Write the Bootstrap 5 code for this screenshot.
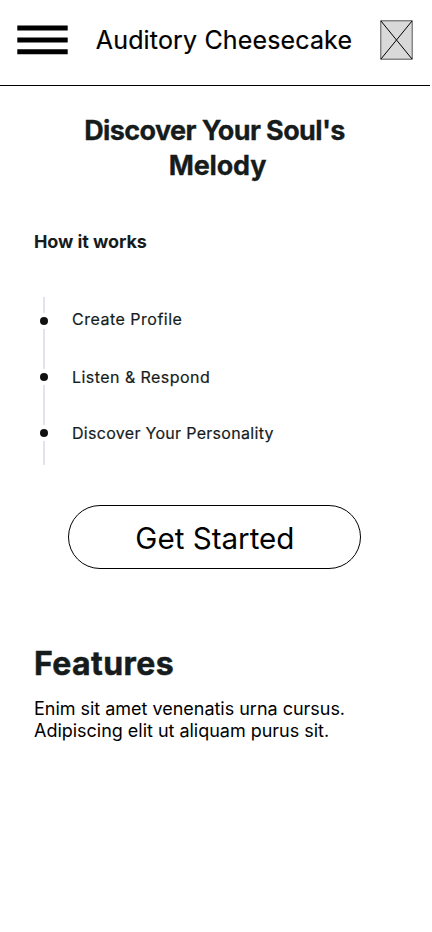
<!DOCTYPE html>
<html lang="en">
<head>
<meta charset="utf-8">
<meta name="viewport" content="width=device-width, initial-scale=1">
<title>Auditory Cheesecake</title>
<link href="https://cdn.jsdelivr.net/npm/bootstrap@5.3.0/dist/css/bootstrap.min.css" rel="stylesheet">
<style>
body{font-family:Inter,sans-serif;color:#000;background:#fff}
.screen{width:430px;height:932px}
.topbar{height:86px;border-bottom:1px solid #000;padding:0 17px 5px}
.app-title{font-size:25px;line-height:30px;letter-spacing:.15px;-webkit-text-stroke:.2px #000}
.content{padding:0 34px}
.ink{color:#161c1c;font-weight:700}
.hero{font-size:27px;line-height:35px;letter-spacing:-.62px;padding-top:27px;padding-right:1px;-webkit-text-stroke:.3px #161c1c}
.h-b{letter-spacing:-.2px;padding-left:6px}
.how{font-size:18px;line-height:24px;letter-spacing:-.08px;margin-top:47px}
.steps{margin-top:43px;height:168px}
.step{height:56px;font-size:16px;line-height:24px;color:#161c1c;-webkit-text-stroke:.2px #161c1c}
.rail{width:20px;margin-right:18px}
.seg{width:2px;background:#e1e5ea}
.seg-top{height:16px}
.dot{width:8px;height:8px;margin:4px 0;background:#111}
.label{padding-top:12px}
.s1{letter-spacing:.5px;padding-top:10px}
.s2{letter-spacing:.45px}
.s3{letter-spacing:.3px}
.start{width:293px;height:64px;margin:40px 0 0 34.4px;border:1px solid #000;font-size:29.6px;line-height:36px;color:#000}
.start-text{padding-top:1px}
.feat{font-size:32px;line-height:40px;letter-spacing:.42px;margin-top:75px;-webkit-text-stroke:.5px #161c1c}
.copy{font-size:18px;line-height:22px;letter-spacing:-.02px;margin-top:14px}
</style>
</head>
<body>
<div class="screen overflow-hidden">
<header class="topbar d-flex align-items-center justify-content-between">
<button class="btn p-0 border-0 d-flex" aria-label="Menu"><svg width="51" height="30" viewBox="0 0 51 30"><path d="M.3.6h50.4v5H.3zM.3 12.4h50.4v5H.3zM.3 24.2h50.4v5H.3z"/></svg></button>
<span class="app-title text-nowrap">Auditory Cheesecake</span>
<svg width="33" height="40" viewBox="0 0 33 40"><path fill="#d9d9d9" stroke="#555" d="M.8.8h31.4v38.4H.8z"/><path stroke="#000" d="m.8.8 31.4 38.4M32.2.8.8 39.2"/></svg>
</header>
<main class="content">
<h1 class="hero ink text-center mb-0">Discover Your Soul's<br><span class="h-b">Melody</span></h1>
<h2 class="how ink mb-0">How it works</h2>
<ul class="steps list-unstyled mb-0">
<li class="step d-flex"><span class="rail d-flex flex-column align-items-center"><span class="seg seg-top"></span><span class="dot rounded-circle"></span><span class="seg flex-fill"></span></span><span class="label s1">Create Profile</span></li>
<li class="step d-flex"><span class="rail d-flex flex-column align-items-center"><span class="seg seg-top"></span><span class="dot rounded-circle"></span><span class="seg flex-fill"></span></span><span class="label s2">Listen &amp; Respond</span></li>
<li class="step d-flex"><span class="rail d-flex flex-column align-items-center"><span class="seg seg-top"></span><span class="dot rounded-circle"></span><span class="seg flex-fill"></span></span><span class="label s3">Discover Your Personality</span></li>
</ul>
<button class="start btn rounded-pill p-0"><span class="start-text d-block">Get Started</span></button>
<h2 class="feat ink mb-0">Features</h2>
<p class="copy mb-0">Enim sit amet venenatis urna cursus.<br>Adipiscing elit ut aliquam purus sit.</p>
</main>
</div>
<script src="https://cdn.jsdelivr.net/npm/bootstrap@5.3.0/dist/js/bootstrap.bundle.min.js"></script>
</body>
</html>
